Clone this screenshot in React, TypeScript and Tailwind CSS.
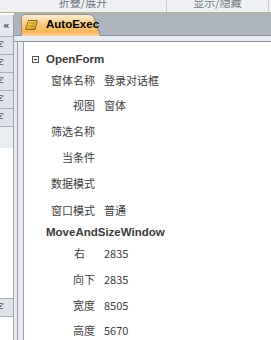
import React from "react";

const cjk = "font-['Noto_Sans_CJK_SC','Noto_Sans',sans-serif]";

type Row =
  | { kind: "head"; text: string; h: string; box?: boolean }
  | { kind: "row"; label: string; value?: string; h: string; pr?: string };

const rows: Row[] = [
  { kind: "head", text: "OpenForm", h: "h-[17px]", box: true },
  { kind: "row", label: "窗体名称", value: "登录对话框", h: "h-[25px]" },
  { kind: "row", label: "视图", value: "窗体", h: "h-[25px]" },
  { kind: "row", label: "筛选名称", h: "h-[26px]" },
  { kind: "row", label: "当条件", h: "h-[26px]" },
  { kind: "row", label: "数据模式", h: "h-[27px]" },
  { kind: "row", label: "窗口模式", value: "普通", h: "h-[27px]" },
  { kind: "head", text: "MoveAndSizeWindow", h: "h-[17px]" },
  { kind: "row", label: "右", value: "2835", h: "h-[25px]", pr: "pr-[10px]" },
  { kind: "row", label: "向下", value: "2835", h: "h-[27px]" },
  { kind: "row", label: "宽度", value: "8505", h: "h-[25px]" },
  { kind: "row", label: "高度", value: "5670", h: "h-[25px]" },
];

const MacroIcon = () => (
  <svg width="13" height="10" viewBox="0 0 13 10" className="shrink-0">
    <defs>
      <linearGradient id="gold" x1="0" y1="0" x2="1" y2="1">
        <stop offset="0" stopColor="#fff2a8" />
        <stop offset="0.5" stopColor="#e9bf3a" />
        <stop offset="1" stopColor="#c08a14" />
      </linearGradient>
    </defs>
    <path
      d="M3.5 0.5 H12 Q12.5 0.5 12.2 1.5 L10 9.5 H1 Q0.4 9.5 0.8 8.5 Z"
      fill="url(#gold)"
      stroke="#7a5a10"
      strokeWidth="0.9"
    />
    <path d="M4 3 H10 M3.2 6 H9" stroke="#a47a18" strokeWidth="0.8" />
  </svg>
);

const Tab = () => (
  <div className="relative z-10 ml-[7px] -mb-[1px] flex h-[22px] w-[80px] items-center">
    <svg
      width="80"
      height="22"
      viewBox="0 0 80 22"
      className="absolute inset-0"
    >
      <defs>
        <linearGradient id="tabg" x1="0" y1="0" x2="0" y2="1">
          <stop offset="0" stopColor="#fff1dc" />
          <stop offset="0.45" stopColor="#fcc97e" />
          <stop offset="0.8" stopColor="#f9b85a" />
          <stop offset="1" stopColor="#fbd6a2" />
        </linearGradient>
      </defs>
      <path
        d="M0.5 22 V4 Q0.5 0.5 4 0.5 H68 Q71 0.5 72.5 3 L79.5 22"
        fill="url(#tabg)"
        stroke="#9b8f80"
      />
    </svg>
    <div className="relative flex items-center pl-[4px]">
      <MacroIcon />
      <span className="ml-[8px] font-['Liberation_Sans',Arial,sans-serif] text-[11.5px] font-bold leading-none text-black">
        AutoExec
      </span>
    </div>
  </div>
);

const SideItem = () => (
  <div className="flex h-[18px] items-center overflow-hidden border-b border-[#a9afb8] bg-[#dfe3ea]">
    <span className={`${cjk} -ml-[7px] text-[11px] leading-none text-[#555a62]`}>
      字
    </span>
  </div>
);

export default function App() {
  return (
    <div className="relative flex h-[340px] w-[271px] flex-col overflow-hidden bg-white">
      {/* top toolbar, clipped */}
      <div className="flex h-[13px] shrink-0 border-b border-[#b3b67e] bg-[#eef0f4]">
        <div className="flex h-full w-[167px] justify-center overflow-hidden border-r border-[#c9cdd3]">
          <span className={`${cjk} -mt-[4px] text-[11px] leading-[12px] text-[#6e737b]`}>
            折叠/展开
          </span>
        </div>
        <div className="flex h-full w-[102px] justify-center overflow-hidden border-r border-[#c9cdd3]">
          <span className={`${cjk} -mt-[4px] text-[11px] leading-[12px] text-[#6e737b]`}>
            显示/隐藏
          </span>
        </div>
      </div>

      <div className="flex flex-1">
        {/* navigation pane, collapsed */}
        <div className="mt-[2px] flex w-[14px] shrink-0 flex-col border-r border-[#9aa0a8]">
          <div className="flex h-[22px] items-center border-b border-[#a9afb8] bg-[#e4e8ee]">
            <span className="ml-[3px] font-['DejaVu_Sans',sans-serif] text-[10px] font-bold leading-none text-[#3f444b]">
              «
            </span>
          </div>
          <SideItem />
          <SideItem />
          <SideItem />
          <SideItem />
          <SideItem />
          <div className="h-[21px] bg-[#e9ecf1]" />
          <div className="h-[150px]" />
          <div className="border-t border-[#a9afb8]">
            <SideItem />
          </div>
        </div>

        {/* document area */}
        <div className="flex flex-1 flex-col">
          <div className="flex h-[23px] shrink-0 items-end border-b border-[#8d939c] bg-[#adb4be]">
            <Tab />
          </div>
          <div className="h-[6px] shrink-0 border-b border-[#8d939c] bg-[#e9ecf1]" />
          <div className="flex flex-1">
            <div className="w-[3px] bg-[#e9ecf1]" />
            <div className="w-[6px] border-l border-[#9aa0a8] bg-[#e9ecf1]" />
            <div
              className={`${cjk} flex flex-1 flex-col border-l border-[#9aa0a8] pt-[9px] text-[11px] text-[#3d3d3d]`}
            >
              {rows.map((r, i) =>
                r.kind === "head" ? (
                  <div key={i} className={`${r.h} flex items-center`}>
                    <div className="ml-[8px] w-[7px]">
                      {r.box && (
                        <div className="flex h-[7px] w-[7px] items-center justify-center border border-[#555]">
                          <div className="h-[1px] w-[3px] bg-[#333]" />
                        </div>
                      )}
                    </div>
                    <span className="ml-[7px] font-['Liberation_Sans',Arial,sans-serif] text-[11.5px] font-bold leading-none text-[#3a3a3a]">
                      {r.text}
                    </span>
                  </div>
                ) : (
                  <div key={i} className={`${r.h} flex items-center`}>
                    <div className={`w-[71px] text-right leading-none ${r.pr ?? ""}`}>
                      {r.label}
                    </div>
                    {r.value && (
                      <div className="ml-[9px] leading-none">{r.value}</div>
                    )}
                  </div>
                )
              )}
            </div>
          </div>
        </div>
      </div>
    </div>
  );
}
